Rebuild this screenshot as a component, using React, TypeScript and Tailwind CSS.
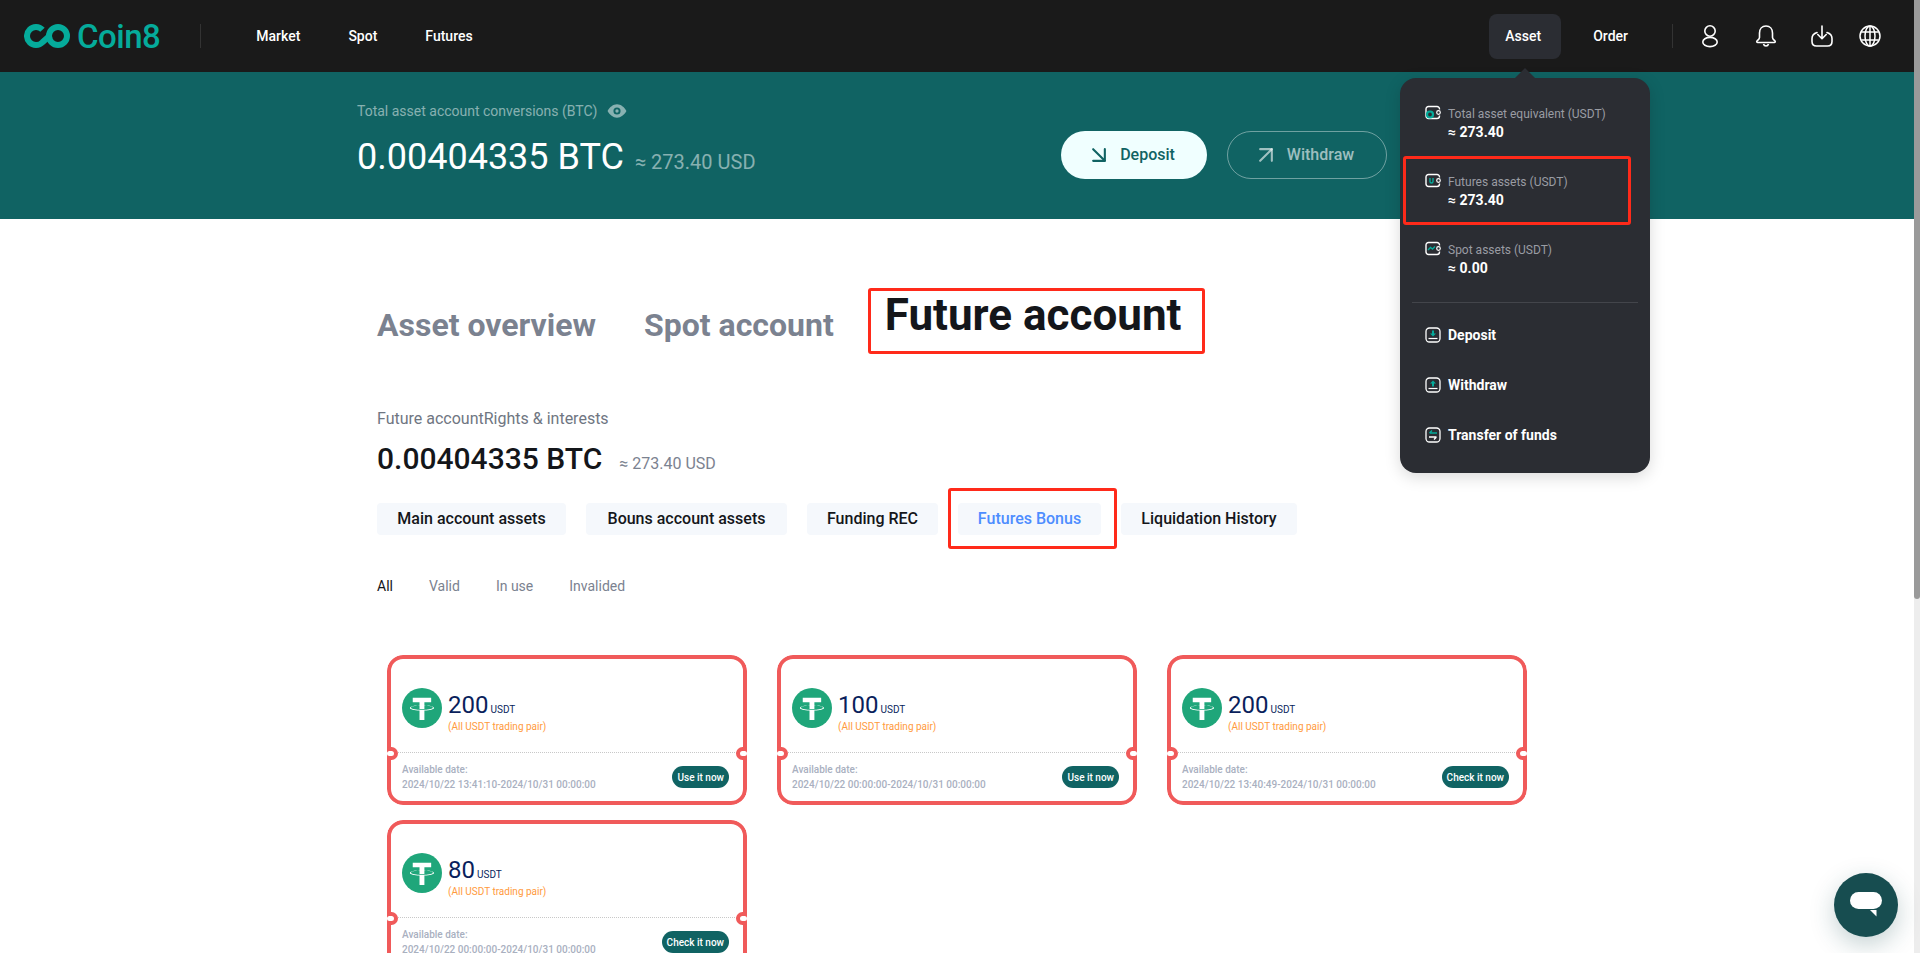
import { ArrowDownRight, ArrowUpRight } from 'lucide-react'

const navLinks = [
  { label: 'Market', className: 'ml-[55px]' },
  { label: 'Spot', className: 'ml-[48px]' },
  { label: 'Futures', className: 'ml-[48px]' },
]

const subTabs = [
  { label: 'Main account assets', className: 'w-[189px] text-[#14161a]' },
  { label: 'Bouns account assets', className: 'w-[201px] text-[#14161a]' },
  { label: 'Funding REC', className: 'w-[131px] text-[#14161a]' },
  { label: 'Futures Bonus', className: 'w-[143px] text-[#4d8dff]' },
  { label: 'Liquidation History', className: 'w-[176px] text-[#14161a]' },
]

const filters = ['All', 'Valid', 'In use', 'Invalided']

const coupons = [
  { amount: '200', from: '2024/10/22 13:41:10', action: 'Use it now' },
  { amount: '100', from: '2024/10/22 00:00:00', action: 'Use it now' },
  { amount: '200', from: '2024/10/22 13:40:49', action: 'Check it now' },
  { amount: '80', from: '2024/10/22 00:00:00', action: 'Check it now' },
]

function Logo() {
  return (
    <svg width="46" height="24" viewBox="0 0 46 24" fill="none" stroke="#05ab9b" strokeWidth="6">
      <path d="M18.500 5.800A9 9 0 1 0 18.500 18.200L26.500 11" />
      <circle cx="34" cy="12" r="9" />
    </svg>
  )
}

function TetherIcon() {
  return (
    <svg width="40" height="40" viewBox="0 0 32 32" className="mb-[12px] shrink-0">
      <circle cx="16" cy="16" r="16" fill="#1fa67a" />
      <path
        fill="#fff"
        d="M17.922 17.383v-.002c-.11.008-.677.042-1.942.042-1.01 0-1.721-.03-1.971-.042v.003c-3.888-.171-6.79-.848-6.79-1.658 0-.809 2.902-1.486 6.79-1.66v2.644c.254.018.982.061 1.988.061 1.207 0 1.812-.05 1.925-.06v-2.643c3.88.173 6.775.85 6.775 1.658 0 .81-2.895 1.485-6.775 1.657m0-3.59v-2.366h5.414V7.819H8.595v3.608h5.414v2.365c-4.4.202-7.709 1.074-7.709 2.118 0 1.044 3.309 1.915 7.709 2.118v7.582h3.913v-7.584c4.393-.202 7.694-1.073 7.694-2.116 0-1.043-3.301-1.914-7.694-2.117"
      />
    </svg>
  )
}

function UserIcon() {
  return (
    <svg width="22" height="24" viewBox="0 0 22 24" fill="none" stroke="#fff" strokeWidth="1.6">
      <circle cx="11" cy="7" r="5.200" />
      <ellipse cx="11" cy="18" rx="7.200" ry="4.600" />
    </svg>
  )
}

function BellIcon() {
  return (
    <svg width="22" height="24" viewBox="0 0 22 24" fill="none" stroke="#fff" strokeWidth="1.6" strokeLinejoin="round">
      <path d="M11 2c-4 0-6.500 3-6.500 7v4.500c0 1.500-1.500 2.500-2.500 3.500-.6.6-.2 1.500.7 1.500h16.600c.9 0 1.300-.9.700-1.500-1-1-2.500-2-2.500-3.500V9c0-4-2.500-7-6.500-7z" />
      <path d="M8.500 20c.4 1.500 1.300 2 2.500 2s2.100-.5 2.500-2" />
    </svg>
  )
}

function DownloadIcon() {
  return (
    <svg width="22" height="24" viewBox="0 0 22 24" fill="none" stroke="#fff" strokeWidth="1.6" strokeLinecap="round" strokeLinejoin="round">
      <path d="M6 8.500C3 9.500 1 11.500 1 14.500v3C1 20 2.700 22 5.500 22h11c2.800 0 4.500-2 4.500-4.500v-3c0-3-2-5-5-6" />
      <path d="M11 2v12.500M6.800 10.500l4.200 4.200 4.200-4.200" />
    </svg>
  )
}

function GlobeIcon() {
  return (
    <svg width="24" height="24" viewBox="0 0 24 24" fill="none" stroke="#fff" strokeWidth="1.500">
      <circle cx="12" cy="12" r="10" />
      <ellipse cx="12" cy="12" rx="5" ry="10" />
      <path d="M3.200 8h17.600M3.200 16h17.600M12 2v20" />
    </svg>
  )
}

function MenuIcon({ kind }: { kind: string }) {
  if (kind === 'deposit' || kind === 'withdraw' || kind === 'transfer') {
    return (
      <svg width="16" height="16" viewBox="0 0 16 16" fill="none" className="shrink-0">
        <rect x="1" y="1" width="14" height="14" rx="3.500" stroke="#fff" strokeWidth="1.300" />
        {kind === 'deposit' && (
          <>
            <path d="M7 3.500h2v3h2L8 9.500 5 6.500h2z" fill="#05ab9b" />
            <path d="M3.500 11.500h9" stroke="#fff" strokeWidth="1.200" />
          </>
        )}
        {kind === 'withdraw' && (
          <>
            <path d="M7 9.500h2v-3h2L8 3.500 5 6.500h2z" fill="#05ab9b" />
            <path d="M3.500 11.500h9" stroke="#fff" strokeWidth="1.200" />
          </>
        )}
        {kind === 'transfer' && (
          <>
            <path d="M12 6H4.500M7 3.500L4.500 6" stroke="#05ab9b" strokeWidth="1.400" />
            <path d="M4 10h7.500M9 12.500l2.500-2.500" stroke="#fff" strokeWidth="1.400" />
          </>
        )}
      </svg>
    )
  }
  return (
    <svg width="16" height="16" viewBox="0 0 16 16" fill="none" className="shrink-0">
      <path d="M14.500 4.500V4A2.500 2.500 0 0 0 12 1.500H3.500A2.500 2.500 0 0 0 1 4v7a2.500 2.500 0 0 0 2.500 2.500H12a2.500 2.500 0 0 0 2.500-2.500v-.5" stroke="#fff" strokeWidth="1.400" />
      <circle cx="13.500" cy="7.500" r="1.800" stroke="#fff" strokeWidth="1.200" />
      {kind === 'total' && <circle cx="5" cy="9.500" r="3" stroke="#05ab9b" strokeWidth="2.200" />}
      {kind === 'futures' && <path d="M5 5v3.500a1.500 1.500 0 0 0 3 0V5" stroke="#05ab9b" strokeWidth="1.400" />}
      {kind === 'spot' && <path d="M3 9l2.500-2.500L7.500 8l2.500-2.500" stroke="#05ab9b" strokeWidth="1.400" />}
    </svg>
  )
}

function Coupon({ amount, from, action }: { amount: string; from: string; action: string }) {
  return (
    <div className="relative h-[150px] w-[360px] overflow-hidden rounded-[16px]">
      <div className="flex h-full flex-col rounded-[16px] border-4 border-[#f05a5a] bg-white">
        <div className="flex h-[94px] items-center gap-[6px] border-b border-dotted border-[#c8c8c8] pl-[11px] pt-[16px]">
          <TetherIcon />
          <div>
            <div className="flex items-baseline leading-[22px] text-[#0a1f5c]">
              <span className="text-[24px]">{amount}</span>
              <span className="ml-[2px] text-[10px]">USDT</span>
            </div>
            <div className="text-[10px] leading-[12px] text-[#ff9a3c]">(All USDT trading pair)</div>
          </div>
        </div>
        <div className="flex flex-1 items-center justify-between pl-[11px] pr-[14px]">
          <div className="text-[10px] font-medium leading-[15px] text-[#a9b0bf]">
            <div>Available date:</div>
            <div>{from}-2024/10/31 00:00:00</div>
          </div>
          <button className="h-[22px] rounded-full bg-[#106363] px-[5px] text-[10px] font-medium text-white">{action}</button>
        </div>
      </div>
      <span className="absolute left-[-4px] top-[92px] h-[13px] w-[15px] rounded-full border-4 border-[#f05a5a] bg-white" />
      <span className="absolute right-[-4px] top-[92px] h-[13px] w-[15px] rounded-full border-4 border-[#f05a5a] bg-white" />
    </div>
  )
}

function AssetRow({ kind, label, value }: { kind: string; label: string; value: string }) {
  return (
    <div className="flex h-[68px] gap-[7px] pl-[25px] pt-[28px]">
      <div className="-mt-[1px]">
        <MenuIcon kind={kind} />
      </div>
      <div>
        <div className="text-[12px] leading-[16px] text-[#9a9ca3]">{label}</div>
        <div className="text-[14px] font-bold leading-[20px] text-white">{value}</div>
      </div>
    </div>
  )
}

function ActionRow({ kind, label }: { kind: string; label: string }) {
  return (
    <div className="flex h-[50px] items-center gap-[7px] pl-[25px]">
      <MenuIcon kind={kind} />
      <span className="text-[14px] font-bold text-white">{label}</span>
    </div>
  )
}

export default function App() {
  return (
    <div className="relative flex h-[953px] w-full overflow-hidden bg-white font-['Roboto',sans-serif]">
      <main className="min-w-0 flex-1">
        {/* Header */}
        <header className="flex h-[72px] items-center bg-[#1a1a1a] pl-[24px] text-[14px] font-medium text-white">
          <Logo />
          <span className="ml-[7px] text-[33px] font-medium leading-none tracking-[-0.5px] text-[#05ab9b]">Coin8</span>
          <span className="ml-[40px] h-[24px] w-px bg-[#333]" />
          {navLinks.map((n) => (
            <a key={n.label} className={n.className}>
              {n.label}
            </a>
          ))}
          <div className="ml-auto flex items-center pr-[32px]">
            <a className="flex h-[45px] w-[72px] items-center justify-center rounded-[8px] bg-[#2b2d33] pr-[4px]">Asset</a>
            <a className="ml-[32px]">Order</a>
            <span className="ml-[44px] h-[24px] w-px bg-[#333]" />
            <span className="ml-[26px]"><UserIcon /></span>
            <span className="ml-[34px]"><BellIcon /></span>
            <span className="ml-[34px]"><DownloadIcon /></span>
            <span className="ml-[25px]"><GlobeIcon /></span>
          </div>
        </header>

        {/* Summary band */}
        <section className="h-[147px] bg-[#106363] pl-[357px] pt-[29px]">
          <div className="flex w-[1030px] items-start justify-between">
            <div>
              <div className="flex items-center gap-[10px] text-[14px] leading-[20px] text-white/50">
                Total asset account conversions (BTC)
                <svg width="20" height="20" viewBox="0 0 18 18" className="text-white/50">
                  <path fill="currentColor" fillRule="evenodd" d="M9 3c3.500 0 6.500 2.500 8.500 6-2 3.500-5 6-8.500 6S2.500 12.500.5 9C2.500 5.500 5.500 3 9 3zm0 2.800a3.200 3.200 0 1 0 0 6.400 3.200 3.200 0 0 0 0-6.400zm0 1.700a1.500 1.500 0 1 1 0 3 1.500 1.500 0 0 1 0-3z" />
                </svg>
              </div>
              <div className="mt-[15px] flex items-baseline">
                <span className="text-[36px] leading-[42px] text-white">0.00404335 BTC</span>
                <span className="ml-[11px] text-[20px] text-white/50">≈ 273.40 USD</span>
              </div>
            </div>
            <div className="mt-[30px] flex gap-[20px]">
              <button className="flex h-[48px] w-[146px] items-center justify-center gap-[7px] rounded-full bg-[#f0ffff] text-[16px] font-medium text-[#106363]">
                <ArrowDownRight size={28} strokeWidth={1.8} className="-ml-[8px]" />
                Deposit
              </button>
              <button className="flex h-[48px] w-[160px] items-center justify-center gap-[7px] rounded-full border border-white/40 text-[16px] font-medium text-white/60">
                <ArrowUpRight size={28} strokeWidth={1.8} className="-ml-[8px]" />
                Withdraw
              </button>
            </div>
          </div>
        </section>

        {/* Account content */}
        <section className="pl-[377px]">
          <div className="flex h-[134px] items-start pt-[70px]">
            <span className="pt-[13px] text-[32px] font-bold leading-[46px] text-[#7b8290]">Asset overview</span>
            <span className="ml-[48px] pt-[13px] text-[32px] font-bold leading-[46px] text-[#7b8290]">Spot account</span>
            <span className="ml-[51px] pt-[1px] text-[44px] font-bold leading-[50px] text-[#14161a]">Future account</span>
          </div>
          <div className="mt-[54px] text-[16px] leading-[24px] text-[#6f7682]">Future accountRights &amp; interests</div>
          <div className="mt-[8px] flex items-baseline">
            <span className="text-[30px] font-medium leading-[40px] text-[#14161a]">0.00404335 BTC</span>
            <span className="ml-[17px] text-[16px] text-[#7b8290]">≈ 273.40 USD</span>
          </div>
          <div className="mt-[24px] flex gap-[20px]">
            {subTabs.map((t) => (
              <button key={t.label} className={`h-[32px] rounded-[4px] bg-[#f5f8fc] text-[16px] font-medium ${t.className}`}>
                {t.label}
              </button>
            ))}
          </div>
          <div className="mt-[41px] flex gap-[36px] text-[14px] leading-[20px] text-[#7b8290]">
            {filters.map((f, i) => (
              <span key={f} className={i === 0 ? 'text-[#14161a]' : ''}>
                {f}
              </span>
            ))}
          </div>
          <div className="ml-[10px] mt-[59px] grid w-[1140px] grid-cols-3 gap-x-[30px] gap-y-[15px]">
            {coupons.map((c, i) => (
              <Coupon key={i} amount={c.amount} from={c.from} action={c.action} />
            ))}
          </div>
        </section>
      </main>

      {/* Scrollbar */}
      <div className="w-[6px] shrink-0 bg-[#ededed]">
        <div className="h-[599px] rounded-b-[3px] bg-[#9a9a9a]" />
      </div>

      {/* Asset dropdown */}
      <div className="absolute left-[1400px] top-[78px] h-[395px] w-[250px] rounded-[16px] bg-[#2b2d33] shadow-[0_4px_16px_rgba(0,0,0,0.15)]">
        <span className="absolute left-[115px] top-[-10px] h-0 w-0 border-x-[10px] border-b-[10px] border-x-transparent border-b-[#2b2d33]" />
        <AssetRow kind="total" label="Total asset equivalent (USDT)" value="≈ 273.40" />
        <AssetRow kind="futures" label="Futures assets (USDT)" value="≈ 273.40" />
        <AssetRow kind="spot" label="Spot assets (USDT)" value="≈ 0.00" />
        <div className="mx-[12px] mt-[20px] h-px bg-[#43454b]" />
        <div className="mt-[7px]">
          <ActionRow kind="deposit" label="Deposit" />
          <ActionRow kind="withdraw" label="Withdraw" />
          <ActionRow kind="transfer" label="Transfer of funds" />
        </div>
      </div>

      {/* Red annotation boxes */}
      <span className="absolute left-[1403px] top-[156px] h-[69px] w-[228px] rounded-[3px] border-[3px] border-[#ff2a1a]" />
      <span className="absolute left-[868px] top-[288px] h-[66px] w-[337px] rounded-[3px] border-[3px] border-[#ff2a1a]" />
      <span className="absolute left-[948px] top-[488px] h-[61px] w-[169px] rounded-[3px] border-[3px] border-[#ff2a1a]" />

      {/* Chat bubble */}
      <div className="absolute left-[1834px] top-[873px] flex h-[64px] w-[64px] items-center justify-center rounded-full bg-[#174d50] shadow-[0_8px_24px_rgba(23,77,80,0.25)]">
        <svg width="32" height="26" viewBox="0 0 32 26">
          <rect width="32" height="17" rx="8.500" fill="#fff" />
          <path d="M20 18h6.500v6.500z" fill="#fff" />
        </svg>
      </div>
    </div>
  )
}
